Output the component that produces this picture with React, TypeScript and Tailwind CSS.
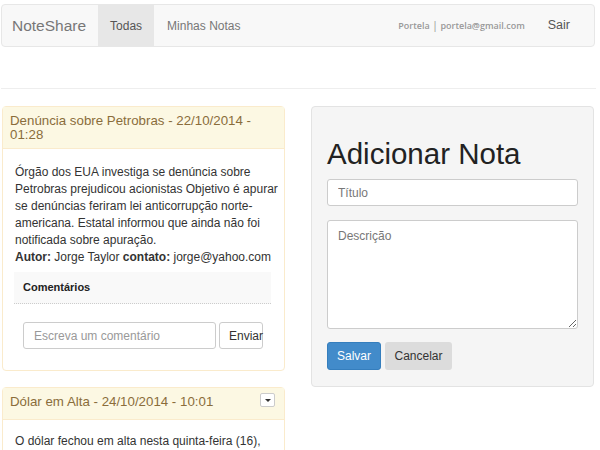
const fontMain = "[font-family:'Liberation_Sans',Arial,sans-serif]";

function Navbar() {
  return (
    <nav className="ml-px mt-[4px] flex h-[43px] w-[594px] items-stretch rounded-[4px] border border-[#e7e7e7] bg-[#f8f8f8]">
      <a className="flex items-center pl-[10px] pr-[12px] text-[15.5px] text-[#777]" href="#">
        NoteShare
      </a>
      <a className="flex w-[56px] items-center justify-center bg-[#e7e7e7] text-[12px] text-[#555]" href="#">
        Todas
      </a>
      <a className="flex items-center pl-[13px] text-[12px] text-[#777]" href="#">
        Minhas Notas
      </a>
      <div className="ml-auto flex items-center pr-[24px]">
        <span className="[font-family:'Open_Sans',sans-serif] text-[9px] font-semibold text-[#999]">
          Portela <span className="text-[11px] font-normal">|</span> portela@gmail.com
        </span>
        <a className="ml-[23px] text-[12.5px] text-[#555]" href="#">
          Sair
        </a>
      </div>
    </nav>
  );
}

function NotePanel({
  title,
  children,
  withToggle,
}: {
  title: string;
  children: React.ReactNode;
  withToggle?: boolean;
}) {
  return (
    <div className="rounded-[4px] border border-[#faebcc] bg-white">
      <div
        className={`flex items-start justify-between border-b border-[#faebcc] bg-[#fcf8e3] pl-[7px] pr-[9px] pt-[7px] text-[#8a6d3b] ${
          withToggle ? "pb-[10px]" : "pb-[6px]"
        }`}
      >
        <h3 className="text-[13.3px] leading-[14px]">{title}</h3>
        {withToggle && (
          <button className="mt-[-2px] flex h-[14px] w-[15px] items-center justify-center rounded-[2px] border border-[#ccc] bg-white">
            <span className="h-0 w-0 border-x-[3px] border-t-[3px] border-x-transparent border-t-[#333]" />
          </button>
        )}
      </div>
      {children}
    </div>
  );
}

export default function App() {
  return (
    <div className={`h-[450px] w-[600px] overflow-hidden bg-white ${fontMain} text-[#333]`}>
      <Navbar />
      <hr className="ml-px mt-[41px] w-[595px] border-t border-[#eee]" />

      <div className="mt-[17px] flex">
        {/* Notes column */}
        <div className="ml-[2px] flex w-[283px] flex-col gap-[16px]">
          <NotePanel title="Denúncia sobre Petrobras - 22/10/2014 - 01:28">
            <div className="px-[12px] pt-[15px] pb-[21px]">
              <p className="-mr-[10px] text-[12px] leading-[17px]">
                Órgão dos EUA investiga se denúncia sobre Petrobras prejudicou acionistas Objetivo é apurar
                se denúncias feriram lei anticorrupção norte-americana. Estatal informou que ainda não foi
                notificada sobre apuração.
                <br />
                <b>Autor:</b> Jorge Taylor <b>contato:</b> jorge@yahoo.com
              </p>
              <div className="-ml-px mt-[6px] mr-px flex h-[32px] items-center border-b border-dotted border-[#ccc] bg-[#f9f9f9] pl-[9px] text-[11px] font-bold text-[#222]">
                Comentários
              </div>
              <div className="mt-[18px] ml-[8px] flex gap-[3px]">
                <input
                  className="h-[27px] w-[193px] rounded-[3px] border border-[#ccc] px-[10px] text-[12px] placeholder:text-[#999]"
                  placeholder="Escreva um comentário"
                />
                <button className="h-[27px] w-[44px] whitespace-nowrap rounded-[3px] border border-[#ccc] bg-white pl-[9px] text-left text-[12px] text-[#333]">
                  Enviar
                </button>
              </div>
            </div>
          </NotePanel>

          <NotePanel title="Dólar em Alta - 24/10/2014 - 10:01" withToggle>
            <div className="px-[12px] pt-[13px] pb-[24px]">
              <p className="text-[12px] leading-[17px]">O dólar fechou em alta nesta quinta-feira (16),</p>
            </div>
          </NotePanel>
        </div>

        {/* New note form */}
        <div className="ml-[26px] h-[281px] w-[283px] rounded-[4px] border border-[#e3e3e3] bg-[#f5f5f5] px-[15px] pt-[30px]">
          <h1 className="mb-[8px] text-[29.5px] leading-[34px] text-[#222]">Adicionar Nota</h1>
          <input
            className="block h-[27px] w-full rounded-[3px] border border-[#ccc] bg-white px-[10px] text-[12px] placeholder:text-[#777]"
            placeholder="Título"
          />
          <textarea
            className="mt-[14px] block h-[109px] w-full rounded-[3px] border border-[#ccc] bg-white px-[10px] py-[6px] text-[12px] placeholder:text-[#777]"
            placeholder="Descrição"
          />
          <div className="mt-[13px] flex gap-[4px]">
            <button className="h-[28px] w-[54px] rounded-[3px] border border-[#357ebd] bg-[#428bca] text-[12px] text-white">
              Salvar
            </button>
            <button className="h-[28px] w-[67px] rounded-[3px] bg-[#dcdcdc] text-[12px] text-[#333]">
              Cancelar
            </button>
          </div>
        </div>
      </div>
    </div>
  );
}
